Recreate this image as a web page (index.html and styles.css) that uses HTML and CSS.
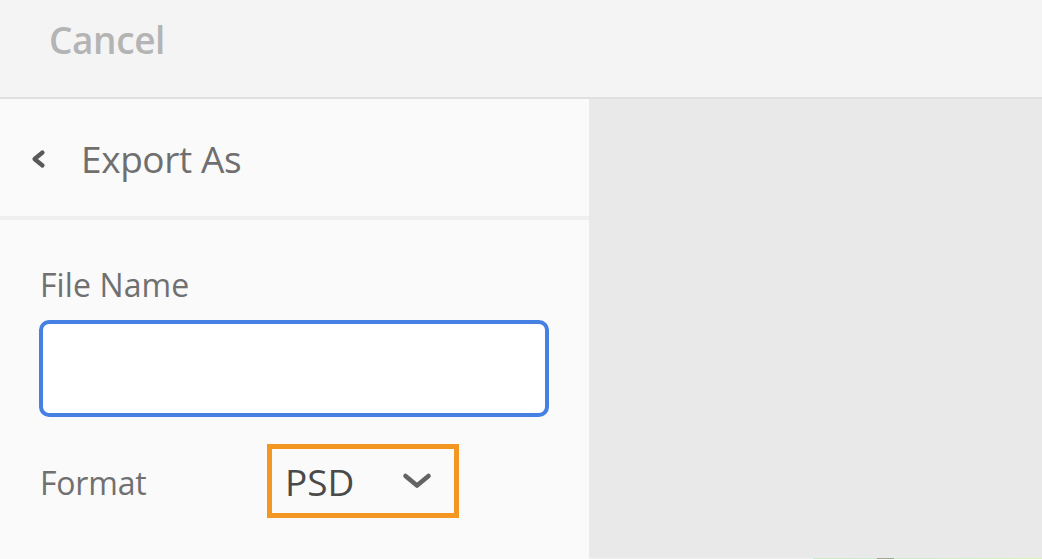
FILE: index.html
```html
<!DOCTYPE html>
<html lang="en">
<head>
<meta charset="utf-8">
<title>Export As</title>
<link rel="stylesheet" href="styles.css">
</head>
<body>
<div class="app">
  <header class="topbar">
    <span class="cancel">Cancel</span>
  </header>
  <main class="main">
    <section class="panel">
      <div class="panel-head">
        <svg class="back" width="18" height="20" viewBox="0 0 18 20" aria-hidden="true">
          <path d="M13.5 3.5 L5.5 10 L13.5 16.5" fill="none" stroke="#595959" stroke-width="4.2" stroke-linecap="round" stroke-linejoin="round"/>
        </svg>
        <span class="panel-title">Export As</span>
      </div>
      <div class="panel-body">
        <label class="field-label">File Name</label>
        <div class="text-input"></div>
        <div class="format-row">
          <span class="format-label">Format</span>
          <div class="select">
            <span class="select-value">PSD</span>
            <svg class="select-caret" width="32" height="18" viewBox="0 0 32 18" aria-hidden="true">
              <path d="M4.5 4 L16 13.5 L27.5 4" fill="none" stroke="#636363" stroke-width="4.6" stroke-linecap="round" stroke-linejoin="round"/>
            </svg>
          </div>
        </div>
      </div>
    </section>
    <section class="canvas">
      <div class="canvas-fill"></div>
      <div class="canvas-strip"><div class="strip-green"><div class="strip-knob"></div></div></div>
    </section>
  </main>
</div>
</body>
</html>
```

FILE: styles.css
```css
* { box-sizing: border-box; }
html, body { margin: 0; padding: 0; }
body {
  width: 1042px;
  height: 559px;
  overflow: hidden;
  font-family: "Open Sans", "Liberation Sans", sans-serif;
  background: #e9e9e9;
}
.app {
  display: flex;
  flex-direction: column;
  height: 559px;
}
.topbar {
  height: 99px;
  flex: 0 0 99px;
  background: #f4f4f4;
  border-bottom: 2px solid #e0e0e0;
  padding: 20px 0 0 49px;
  display: flex;
  align-items: flex-start;
}
.cancel {
  font-size: 37px;
  line-height: 40px;
  font-weight: 600;
  color: #b4b4b4;
  letter-spacing: -0.4px;
}
.main {
  flex: 1;
  display: flex;
  min-height: 0;
}
.panel {
  width: 589px;
  flex: 0 0 589px;
  background: #fafafa;
  display: flex;
  flex-direction: column;
}
.panel-head {
  height: 121px;
  flex: 0 0 121px;
  border-bottom: 4px solid #efefef;
  display: flex;
  align-items: center;
  padding: 2px 0 0 29px;
}
.back { flex: 0 0 18px; margin-top: 1px; }
.panel-title {
  margin-left: 34px;
  font-size: 37px;
  line-height: 40px;
  color: #6f6f6f;
  letter-spacing: -0.4px;
}
.panel-body {
  padding: 47px 0 0 39px;
  display: flex;
  flex-direction: column;
}
.field-label {
  font-size: 32px;
  line-height: 36px;
  color: #707070;
  margin-left: 1px;
  letter-spacing: 0.1px;
}
.text-input {
  margin-top: 17px;
  width: 510px;
  height: 97px;
  border: 4px solid #4680e3;
  border-radius: 10px;
  background: #ffffff;
}
.format-row {
  margin-top: 27px;
  display: flex;
  align-items: flex-start;
}
.format-label {
  width: 228px;
  flex: 0 0 228px;
  margin-top: 21px;
  padding-left: 1px;
  font-size: 32px;
  line-height: 36px;
  color: #707070;
  letter-spacing: -0.2px;
}
.select {
  width: 192px;
  height: 74px;
  border: 5px solid #f39622;
  display: flex;
  align-items: flex-start;
  justify-content: space-between;
  padding: 13px 21px 0 13px;
}
.select-value {
  font-size: 37px;
  line-height: 40px;
  color: #4a4a4a;
  letter-spacing: 0px;
}
.select-caret { margin-top: 10px; }
.canvas {
  flex: 1;
  display: flex;
  flex-direction: column;
}
.canvas-fill {
  flex: 1;
  background: #e9e9e9;
}
.canvas-strip {
  height: 1px;
  flex: 0 0 1px;
  background: #f1f1f1;
  display: flex;
}
.strip-green {
  margin-left: 224px;
  flex: 1;
  background: linear-gradient(90deg, #c9ebcb 0%, #cdeec6 50%, #dcf4b4 100%);
  display: flex;
}
.strip-knob {
  margin-left: 64px;
  width: 17px;
  background: #a2a893;
}
```
